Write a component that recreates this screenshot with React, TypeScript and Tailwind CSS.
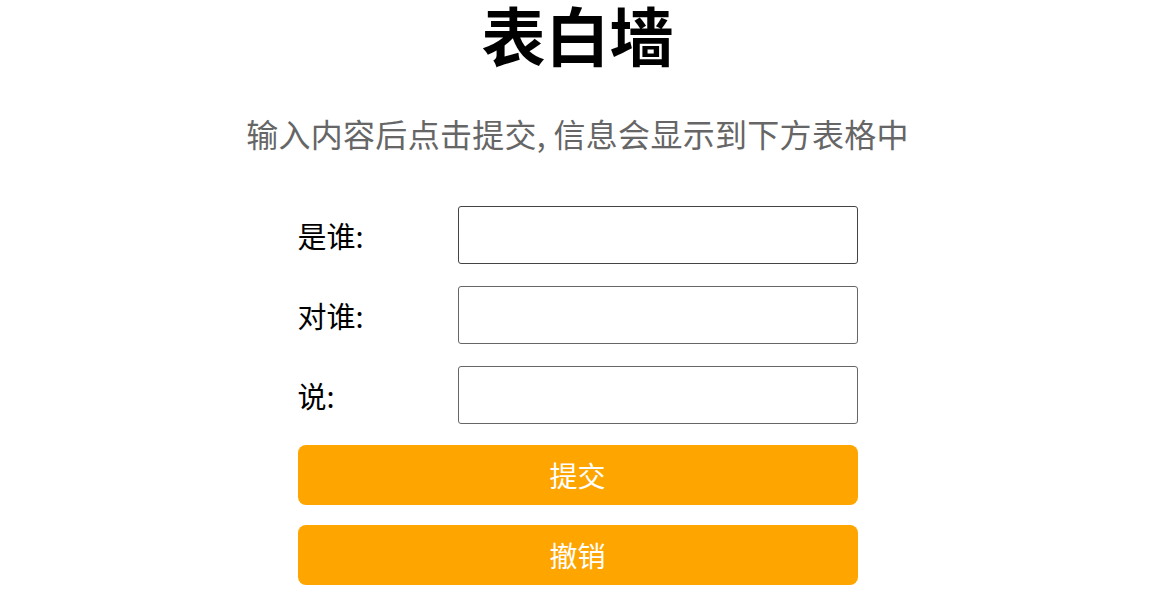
import React from "react";

export default function App() {
  const rows = ["是谁:", "对谁:", "说:"];
  return (
    <div
      className="w-full min-h-[602px] bg-white"
      style={{ fontFamily: '"Noto Sans CJK SC", "Liberation Sans", sans-serif' }}
    >
      <div className="mx-auto w-[560px]">
        <h1 className="text-center text-[64px] leading-[66px] font-bold text-black">表白墙</h1>
        <p className="mt-[52px] text-center text-[32px] leading-[30px] text-[#666] whitespace-nowrap -mx-[60px] tracking-[0.3px]">
          输入内容后点击提交, 信息会显示到下方表格中
        </p>
        <div className="mt-[47px] flex flex-col">
          {rows.map((r, i) => (
            <div key={r} className="flex h-[80px] items-center">
              <span className="w-[160px] text-[29px] leading-[40px] text-black">{r}</span>
              <input
                className={
                  i === 0
                    ? "h-[58px] w-[400px] rounded-[3px] border-[1.5px] border-[#444] bg-white outline-none"
                    : "h-[58px] w-[400px] rounded-[3px] border-[1.5px] border-[#666] bg-white outline-none"
                }
              />
            </div>
          ))}
          {["提交", "撤销"].map((b) => (
            <div key={b} className="flex h-[80px] items-center">
              <button className="h-[60px] w-[560px] rounded-[8px] bg-[#ffa500] text-[28px] leading-[60px] text-white">
                {b}
              </button>
            </div>
          ))}
        </div>
      </div>
    </div>
  );
}
